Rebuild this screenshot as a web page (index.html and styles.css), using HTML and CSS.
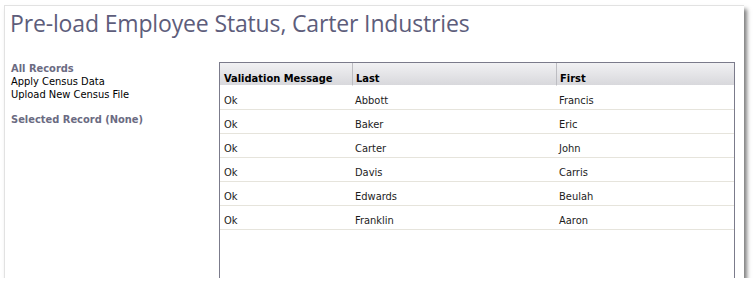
FILE: index.html
```html
<!DOCTYPE html>
<html>
<head>
<meta charset="utf-8">
<link rel="stylesheet" href="styles.css">
</head>
<body>
<div class="card">
  <h1 class="title">Pre-load Employee Status, Carter Industries</h1>
  <div class="main">
    <div class="sidebar">
      <div class="side-head">All Records</div>
      <div class="side-link">Apply Census Data</div>
      <div class="side-link">Upload New Census File</div>
      <div class="side-head side-gap">Selected Record (None)</div>
    </div>
    <div class="panel">
      <div class="grid">
        <div class="th">Validation Message</div>
        <div class="th th-div">Last</div>
        <div class="th th-div">First</div>

        <div class="td">Ok</div><div class="td td2">Abbott</div><div class="td td3">Francis</div>
        <div class="td">Ok</div><div class="td td2">Baker</div><div class="td td3">Eric</div>
        <div class="td">Ok</div><div class="td td2">Carter</div><div class="td td3">John</div>
        <div class="td">Ok</div><div class="td td2">Davis</div><div class="td td3">Carris</div>
        <div class="td">Ok</div><div class="td td2">Edwards</div><div class="td td3">Beulah</div>
        <div class="td">Ok</div><div class="td td2">Franklin</div><div class="td td3">Aaron</div>
      </div>
    </div>
  </div>
</div>
</body>
</html>
```

FILE: styles.css
```css
html, body {
  margin: 0;
  padding: 0;
  background: #ffffff;
}

.card {
  box-sizing: border-box;
  margin: 5px 0 0 4px;
  width: 740px;
  height: 273px;
  background: #ffffff;
  border-top: 1px solid #e2e2e2;
  border-left: 1px solid #e2e2e2;
  box-shadow: 3px 4px 4px rgba(0, 0, 0, 0.5);
  overflow: hidden;
  display: flex;
  flex-direction: column;
}

.title {
  margin: 0 0 23px 0;
  padding: 2px 0 0 5px;
  height: 31px;
  line-height: 31px;
  font-family: "Open Sans", sans-serif;
  font-weight: 400;
  font-size: 23px;
  letter-spacing: -0.15px;
  color: #5d5d7b;
  white-space: nowrap;
}

.main {
  flex: 1;
  display: flex;
  min-height: 0;
}

.sidebar {
  width: 214px;
  padding: 0 0 0 6px;
  box-sizing: border-box;
  font-family: "DejaVu Sans Condensed", "DejaVu Sans", sans-serif;
  font-size: 11px;
  line-height: 13px;
}

.side-head {
  font-weight: bold;
  color: #6b6b82;
}

.side-gap {
  margin-top: 12px;
}

.side-link {
  color: #000000;
}

.panel {
  flex: 1;
  margin-right: 9px;
  border-top: 1px solid #7b7b8b;
  border-left: 1px solid #7b7b8b;
  border-right: 1px solid #7b7b8b;
  height: 240px;
  font-family: "DejaVu Sans Condensed", "DejaVu Sans", sans-serif;
  font-size: 11px;
  line-height: 13px;
}

.grid {
  display: grid;
  grid-template-columns: 132px 204px 1fr;
}

.th {
  height: 23px;
  box-sizing: border-box;
  padding: 9px 4px 1px 4px;
  font-weight: bold;
  color: #000000;
  background: linear-gradient(#f1f1f3, #d8d8dc);
  border-bottom: 1px solid #ffffff;
  white-space: nowrap;
}

.th-div {
  padding-left: 3px;
  border-left: 1px solid #bdbdc2;
}

.td {
  height: 24px;
  box-sizing: border-box;
  padding: 8px 4px 2px 4px;
  color: #1c1c1c;
  border-bottom: 1px solid #e6e4dc;
  white-space: nowrap;
}

.td2, .td3 {
  padding-left: 3px;
}
```
